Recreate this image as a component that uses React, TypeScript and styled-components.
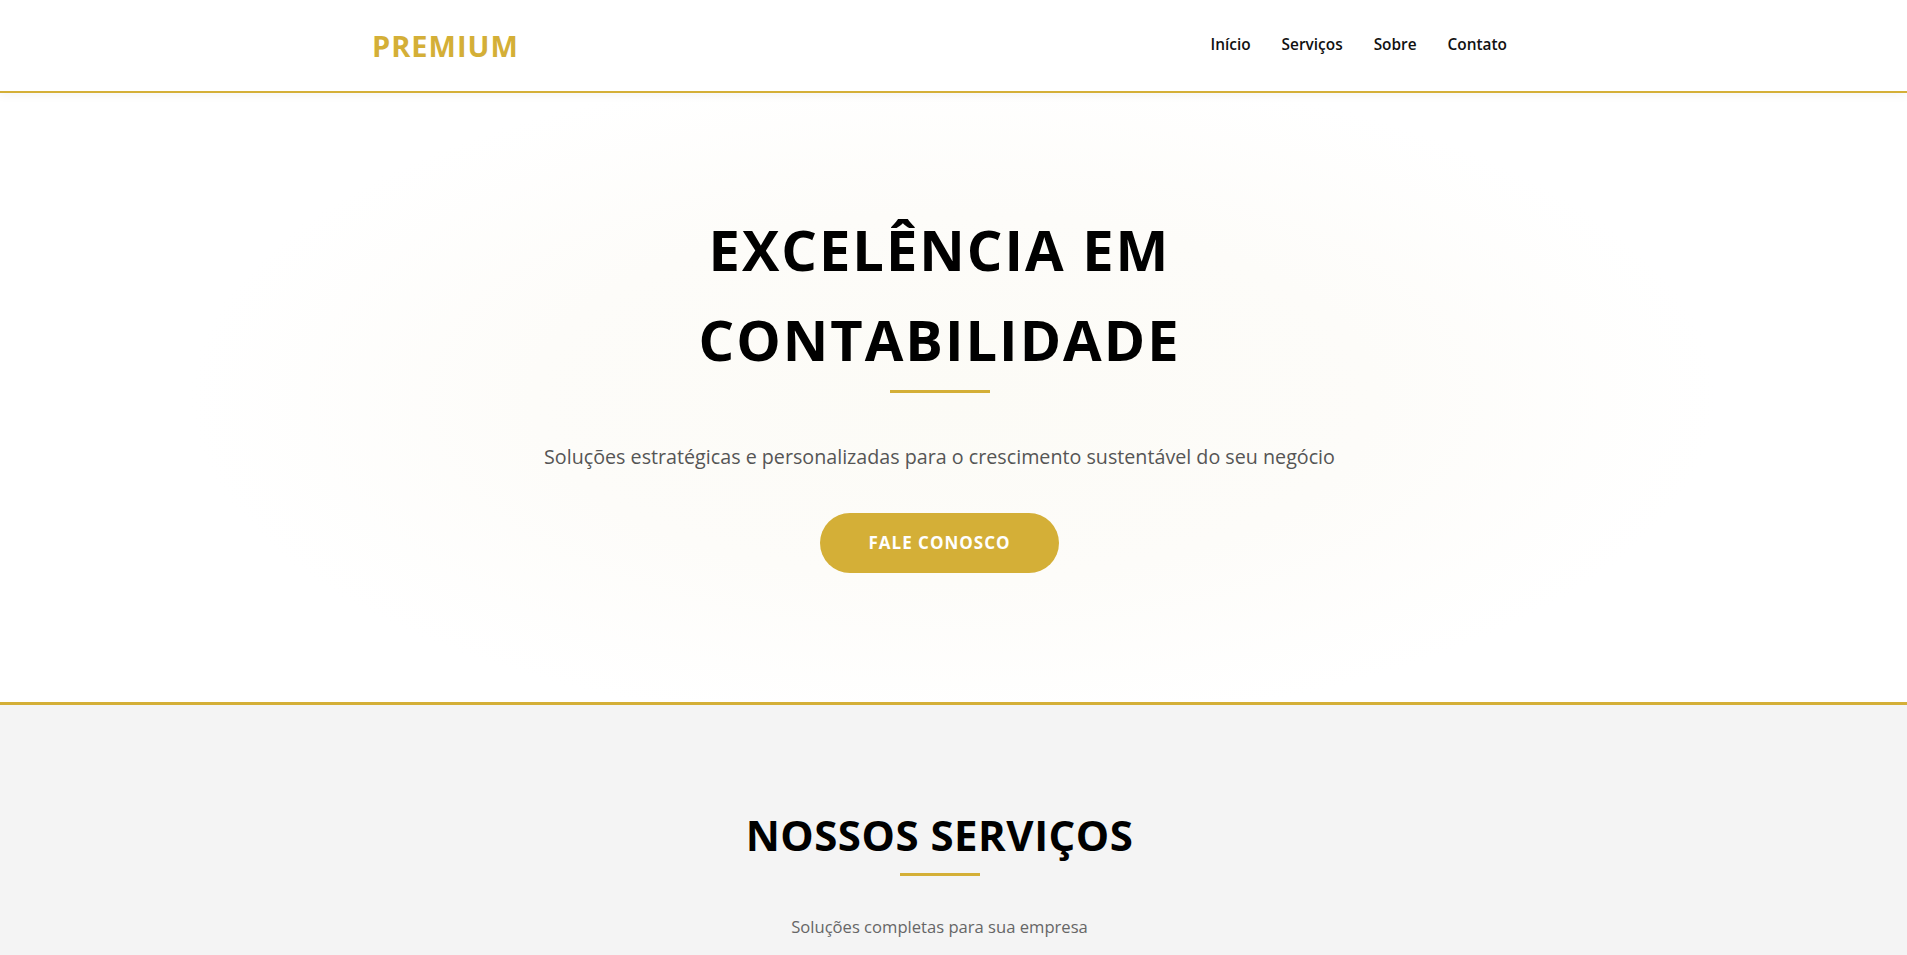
import styled, { createGlobalStyle } from 'styled-components'
import { Calculator, FileText, BarChart3, Briefcase, ShieldCheck, Users, Phone, Mail, MapPin } from 'lucide-react'

const gold = '#d4af37'

const GlobalStyle = createGlobalStyle`
  * { box-sizing: border-box; }
  html, body { margin: 0; padding: 0; }
  body {
    font-family: "Open Sans", "Noto Sans", sans-serif;
    color: #111;
    background: #fff;
  }
`

// shared centred column; the original layout sits a little left of the true centre
const Container = styled.div`
  max-width: 1163px;
  margin: 0 auto;
  padding-right: 28px;
`

const Header = styled.header`
  background: #fff;
  border-bottom: 2px solid ${gold};
  box-shadow: 0 2px 10px rgba(0, 0, 0, 0.05);
  position: relative;
  z-index: 2;
`

const HeaderRow = styled(Container)`
  height: 91px;
  display: flex;
  align-items: center;
  justify-content: space-between;
`

const Logo = styled.a`
  font-size: 29px;
  font-weight: 700;
  letter-spacing: 1px;
  color: ${gold};
  text-decoration: none;
`

const Nav = styled.nav`
  display: flex;
  gap: 31px;
  padding-bottom: 2px;
`

const NavLink = styled.a`
  font-size: 15.4px;
  font-weight: 600;
  color: #111;
  text-decoration: none;
`

const Hero = styled.section`
  background: radial-gradient(ellipse 40% 55% at 50% 50%, #fcfbf6 0%, #fdfcf9 55%, #ffffff 100%);
  border-bottom: 3px solid ${gold};
  padding: 112px 0 129px;
`

const HeroInner = styled(Container)`
  display: flex;
  flex-direction: column;
  align-items: center;
  text-align: center;
`

const HeroTitle = styled.h1`
  margin: 0;
  max-width: 800px;
  font-size: 56px;
  line-height: 1.6;
  font-weight: 700;
  letter-spacing: 2px;
  color: #000;
`

const Divider = styled.span<{ $width: number; $top?: number }>`
  display: block;
  width: ${(p) => p.$width}px;
  height: 3px;
  margin-top: ${(p) => p.$top ?? 0}px;
  background: ${gold};
`

const HeroText = styled.p`
  margin: 48px 0 40px;
  font-size: 19.7px;
  line-height: 1.6;
  color: #555;
`

const CtaButton = styled.a`
  display: inline-flex;
  align-items: center;
  justify-content: center;
  height: 60px;
  padding: 0 48px;
  border-radius: 30px;
  background: ${gold};
  color: #fff;
  font-size: 17px;
  font-weight: 700;
  letter-spacing: 1px;
  text-decoration: none;
`

const Section = styled.section<{ $bg: string }>`
  background: ${(p) => p.$bg};
  padding: 105px 0 110px;
`

const SectionHead = styled.div`
  display: flex;
  flex-direction: column;
  align-items: center;
  text-align: center;
`

const SectionTitle = styled.h2`
  margin: 0 0 13px;
  font-size: 42px;
  line-height: 1.2;
  font-weight: 700;
  letter-spacing: 0.5px;
  color: #000;
`

const SectionText = styled.p`
  margin: 38px 0 0;
  font-size: 16.6px;
  line-height: 1.6;
  color: #666;
`

const CardGrid = styled.div`
  display: grid;
  grid-template-columns: repeat(3, 1fr);
  gap: 32px;
  margin-top: 64px;
`

const Card = styled.div`
  background: #fff;
  border-top: 3px solid ${gold};
  border-radius: 6px;
  padding: 40px 32px;
  box-shadow: 0 6px 20px rgba(0, 0, 0, 0.06);
  display: flex;
  flex-direction: column;
  gap: 16px;
`

const CardIcon = styled.div`
  width: 60px;
  height: 60px;
  border-radius: 50%;
  background: rgba(212, 175, 55, 0.12);
  color: ${gold};
  display: flex;
  align-items: center;
  justify-content: center;
`

const CardTitle = styled.h3`
  margin: 0;
  font-size: 21px;
  font-weight: 700;
`

const CardText = styled.p`
  margin: 0;
  font-size: 16px;
  line-height: 1.7;
  color: #666;
`

const AboutGrid = styled.div`
  display: grid;
  grid-template-columns: 1fr 1fr;
  gap: 64px;
  margin-top: 64px;
  align-items: center;
`

const AboutText = styled.p`
  margin: 0 0 20px;
  font-size: 17px;
  line-height: 1.8;
  color: #555;
`

const Stats = styled.div`
  display: grid;
  grid-template-columns: 1fr 1fr;
  gap: 24px;
`

const Stat = styled.div`
  background: #f4f4f4;
  border-left: 3px solid ${gold};
  padding: 32px;
`

const StatValue = styled.div`
  font-size: 40px;
  font-weight: 700;
  color: ${gold};
`

const StatLabel = styled.div`
  font-size: 15px;
  color: #555;
  margin-top: 4px;
`

const ContactGrid = styled.div`
  display: grid;
  grid-template-columns: repeat(3, 1fr);
  gap: 32px;
  margin-top: 64px;
`

const ContactItem = styled.div`
  background: #fff;
  padding: 36px 28px;
  text-align: center;
  border-radius: 6px;
  box-shadow: 0 6px 20px rgba(0, 0, 0, 0.06);
  display: flex;
  flex-direction: column;
  align-items: center;
  gap: 12px;
  color: #444;
  font-size: 16px;
`

const Footer = styled.footer`
  background: #1a1a1a;
  color: #bbb;
  padding: 48px 0;
  text-align: center;
  font-size: 15px;
  border-top: 3px solid ${gold};
`

const services = [
  { icon: Calculator, title: 'Contabilidade Geral', text: 'Escrituração contábil completa, balancetes e demonstrações financeiras dentro das normas vigentes.' },
  { icon: FileText, title: 'Planejamento Tributário', text: 'Análise do melhor regime tributário para reduzir custos e manter sua empresa em dia com o fisco.' },
  { icon: Users, title: 'Departamento Pessoal', text: 'Folha de pagamento, admissões, rescisões e todas as obrigações trabalhistas e previdenciárias.' },
  { icon: Briefcase, title: 'Abertura de Empresas', text: 'Cuidamos de todo o processo de abertura, alteração e regularização da sua empresa.' },
  { icon: BarChart3, title: 'Consultoria Financeira', text: 'Relatórios gerenciais e indicadores para decisões mais seguras e estratégicas.' },
  { icon: ShieldCheck, title: 'Auditoria', text: 'Revisão de processos e controles internos com total transparência e segurança.' },
]

const stats = [
  { value: '15+', label: 'Anos de experiência' },
  { value: '500+', label: 'Clientes atendidos' },
  { value: '98%', label: 'Satisfação dos clientes' },
  { value: '24h', label: 'Tempo de resposta' },
]

export default function App() {
  return (
    <>
      <GlobalStyle />
      <Header>
        <HeaderRow>
          <Logo href="#">PREMIUM</Logo>
          <Nav>
            <NavLink href="#inicio">Início</NavLink>
            <NavLink href="#servicos">Serviços</NavLink>
            <NavLink href="#sobre">Sobre</NavLink>
            <NavLink href="#contato">Contato</NavLink>
          </Nav>
        </HeaderRow>
      </Header>

      <Hero id="inicio">
        <HeroInner>
          <HeroTitle>EXCELÊNCIA EM CONTABILIDADE</HeroTitle>
          <Divider $width={100} $top={6} />
          <HeroText>Soluções estratégicas e personalizadas para o crescimento sustentável do seu negócio</HeroText>
          <CtaButton href="#contato">FALE CONOSCO</CtaButton>
        </HeroInner>
      </Hero>

      <Section $bg="#f4f4f4" id="servicos">
        <Container>
          <SectionHead>
            <SectionTitle>NOSSOS SERVIÇOS</SectionTitle>
            <Divider $width={80} />
            <SectionText>Soluções completas para sua empresa</SectionText>
          </SectionHead>
          <CardGrid>
            {services.map((s) => (
              <Card key={s.title}>
                <CardIcon>
                  <s.icon size={28} />
                </CardIcon>
                <CardTitle>{s.title}</CardTitle>
                <CardText>{s.text}</CardText>
              </Card>
            ))}
          </CardGrid>
        </Container>
      </Section>

      <Section $bg="#ffffff" id="sobre">
        <Container>
          <SectionHead>
            <SectionTitle>SOBRE NÓS</SectionTitle>
            <Divider $width={80} />
            <SectionText>Tradição e inovação a serviço do seu negócio</SectionText>
          </SectionHead>
          <AboutGrid>
            <div>
              <AboutText>
                Somos um escritório de contabilidade comprometido com a excelência, oferecendo atendimento
                próximo e soluções sob medida para empresas de todos os portes.
              </AboutText>
              <AboutText>
                Nossa equipe de especialistas acompanha as constantes mudanças da legislação para garantir
                segurança, economia e tranquilidade aos nossos clientes.
              </AboutText>
            </div>
            <Stats>
              {stats.map((s) => (
                <Stat key={s.label}>
                  <StatValue>{s.value}</StatValue>
                  <StatLabel>{s.label}</StatLabel>
                </Stat>
              ))}
            </Stats>
          </AboutGrid>
        </Container>
      </Section>

      <Section $bg="#f4f4f4" id="contato">
        <Container>
          <SectionHead>
            <SectionTitle>CONTATO</SectionTitle>
            <Divider $width={80} />
            <SectionText>Entre em contato e agende uma conversa</SectionText>
          </SectionHead>
          <ContactGrid>
            <ContactItem>
              <CardIcon><Phone size={26} /></CardIcon>
              (11) 3000-0000
            </ContactItem>
            <ContactItem>
              <CardIcon><Mail size={26} /></CardIcon>
              contato@premium.com.br
            </ContactItem>
            <ContactItem>
              <CardIcon><MapPin size={26} /></CardIcon>
              Av. Paulista, 1000 - São Paulo
            </ContactItem>
          </ContactGrid>
        </Container>
      </Section>

      <Footer>© 2024 Premium Contabilidade. Todos os direitos reservados.</Footer>
    </>
  )
}
